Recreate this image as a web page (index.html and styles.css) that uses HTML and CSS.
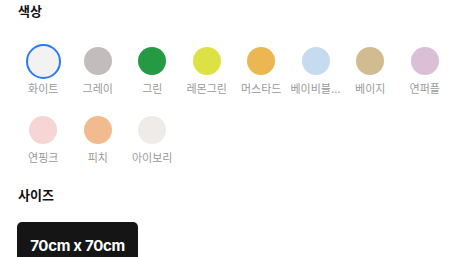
FILE: index.html
```html
<!DOCTYPE html>
<html lang="ko">
<head>
<meta charset="UTF-8">
<meta name="viewport" content="width=device-width, initial-scale=1.0">
<title>옵션 선택</title>
<link rel="stylesheet" href="styles.css">
</head>
<body>

<section class="option">
  <h3>색상</h3>
  <div class="colors">
    <div class="color selected"><span class="swatch" style="background:#f2f2f3"></span><span class="name">화이트</span></div>
    <div class="color"><span class="swatch" style="background:#c2bdbc"></span><span class="name">그레이</span></div>
    <div class="color"><span class="swatch" style="background:#239a43"></span><span class="name">그린</span></div>
    <div class="color"><span class="swatch" style="background:#dde244"></span><span class="name">레몬그린</span></div>
    <div class="color"><span class="swatch" style="background:#ebb752"></span><span class="name">머스타드</span></div>
    <div class="color"><span class="swatch" style="background:#c6dbf0"></span><span class="name">베이비블루</span></div>
    <div class="color"><span class="swatch" style="background:#d1bb91"></span><span class="name">베이지</span></div>
    <div class="color"><span class="swatch" style="background:#dbbfd7"></span><span class="name">연퍼플</span></div>
    <div class="color"><span class="swatch" style="background:#f7d5d5"></span><span class="name">연핑크</span></div>
    <div class="color"><span class="swatch" style="background:#f0bb8e"></span><span class="name">피치</span></div>
    <div class="color"><span class="swatch" style="background:#efebe8"></span><span class="name">아이보리</span></div>
  </div>
</section>

<section class="option">
  <h3>사이즈</h3>
  <div class="sizes">
    <button class="size active">70cm x 70cm</button>
  </div>
</section>

</body>
</html>
```

FILE: styles.css
```css
body {
  margin: 0;
  font-family: Inter, "Noto Sans CJK KR", sans-serif;
  background: #fff;
  color: #111;
}

/* SECTION */
.option h3 {
  margin: 0;
  padding: 2px 18px 0;
  font-size: 13px;
  line-height: 18px;
  font-weight: 700;
}

/* COLORS */
.colors {
  display: grid;
  grid-template-columns: repeat(8, 54.5px);
  row-gap: 18.5px;
  padding: 27px 0 0 16px;
}

.color {
  display: flex;
  flex-direction: column;
  align-items: center;
}

.swatch {
  width: 28px;
  height: 28px;
  border-radius: 50%;
  box-sizing: border-box;
}

.color.selected .swatch {
  width: 35px;
  height: 35px;
  margin: -3.5px 0;
  border: 2.5px solid #2a78f5;
}

.name {
  margin-top: 6px;
  max-width: 50.5px;
  font-size: 11px;
  line-height: 16px;
  color: #9a9a9a;
  white-space: nowrap;
  overflow: hidden;
  text-overflow: ellipsis;
}

/* SIZES */
.option + .option h3 {
  padding-top: 20px;
}

.sizes {
  padding: 18px 0 0 17px;
}

.size {
  width: 121px;
  height: 48px;
  border: none;
  border-radius: 5px;
  background: #151515;
  color: #fff;
  font-family: Inter, sans-serif;
  font-size: 15px;
  font-weight: 700;
  letter-spacing: -0.3px;
  padding: 0;
  vertical-align: top;
}
```
